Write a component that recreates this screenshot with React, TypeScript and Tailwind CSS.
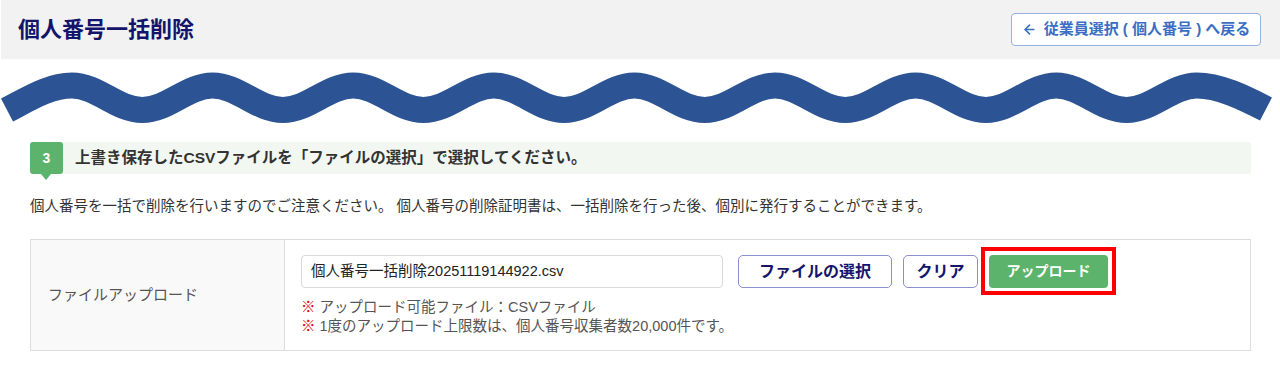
import React from 'react';
import { ArrowLeft } from 'lucide-react';

const FONT = { fontFamily: '"Liberation Sans", "Noto Sans CJK JP", sans-serif' };

function wavePath() {
    const half = 70.3;
    const k = 25.5;
    const crestY = 26.5;
    const troughY = 51;
    let d = `M 7 51 C 30 39 50 ${crestY} 72 ${crestY}`;
    let x = 72;
    let y = crestY;
    for (let i = 0; i < 16; i++) {
        const nx = x + half;
        const ny = y === crestY ? troughY : crestY;
        d += ` C ${(x + k).toFixed(1)} ${y} ${(nx - k).toFixed(1)} ${ny} ${nx.toFixed(1)} ${ny}`;
        x = nx;
        y = ny;
    }
    d += ` C ${(x + 22).toFixed(1)} ${crestY} ${(x + 46).toFixed(1)} 38 1266 50`;
    return d;
}

function Wave() {
    return (
        <svg width="1280" height="83" viewBox="0 0 1280 83" className="block">
            <path d={wavePath()} fill="none" stroke="#2c5393" strokeWidth="26" strokeLinecap="butt" />
        </svg>
    );
}

export default function App() {
    return (
        <div className="w-[1280px] min-h-[375px] bg-white text-[#333]" style={FONT}>
            {/* header */}
            <div className="h-[59px] bg-[#f2f2f2] flex items-center justify-between pl-[17px] pr-[19px] ml-px">
                <h1 className="text-[22px] font-bold text-[#14146b] leading-none">個人番号一括削除</h1>
                <button className="h-[33px] w-[250px] bg-white border border-[#95b3e6] rounded-[4px] text-[15px] font-bold text-[#3a6ec4] flex items-center justify-center">
                    <ArrowLeft size={15} strokeWidth={2.5} className="mr-[7px]" />
                    従業員選択 ( 個人番号 ) へ戻る
                </button>
            </div>

            <Wave />

            <div className="pl-[30px] pr-[29px]">
                {/* step */}
                <div className="h-[32px] bg-[#f2f8f1] rounded-[3px] flex items-center">
                    <div className="relative h-full w-[33px] bg-[#5cb46c] rounded-[3px] flex items-center justify-center text-white font-bold text-[14px]">
                        3
                        <span className="absolute left-[11px] top-full w-0 h-0 border-l-[5px] border-r-[5px] border-t-[6px] border-l-transparent border-r-transparent border-t-[#5cb46c]" />
                    </div>
                    <p className="ml-[12px] text-[15.5px] font-bold text-[#333]">
                        上書き保存したCSVファイルを「ファイルの選択」で選択してください。
                    </p>
                </div>

                <p className="mt-[22px] text-[14.5px] leading-[20px] text-[#333]">
                    個人番号を一括で削除を行いますのでご注意ください。 個人番号の削除証明書は、一括削除を行った後、個別に発行することができます。
                </p>

                {/* table */}
                <div className="mt-[23px] h-[112px] border border-[#dcdcdc] flex">
                    <div className="w-[254px] bg-[#f9f9f9] border-r border-[#dcdcdc] flex items-center pl-[17px] text-[15px] text-[#555]">
                        ファイルアップロード
                    </div>
                    <div className="flex-1 pl-[16px] pt-[15px]">
                        <div className="flex items-center">
                            <div className="w-[422px] h-[33px] border border-[#d9d9d9] rounded-[4px] flex items-center pl-[9px] text-[14.5px] text-[#222]">
                                個人番号一括削除20251119144922.csv
                            </div>
                            <button className="ml-[15px] w-[154px] h-[33px] bg-white border border-[#8a8fd0] rounded-[5px] text-[16px] font-bold text-[#14146b]">
                                ファイルの選択
                            </button>
                            <button className="ml-[11px] w-[75px] h-[33px] bg-white border border-[#8a8fd0] rounded-[5px] text-[16px] font-bold text-[#14146b]">
                                クリア
                            </button>
                            <div className="relative ml-[11px]">
                                <button className="w-[119px] h-[33px] bg-[#5cb46c] rounded-[4px] text-[14px] font-bold text-white">
                                    アップロード
                                </button>
                                <span className="absolute -left-[8px] -right-[8px] -top-[8px] -bottom-[7px] border-4 border-[#ff0000]" />
                            </div>
                        </div>
                        <div className="mt-[10px] text-[14.5px] leading-[19px] text-[#555]">
                            <p><span className="text-[#e60000]">※</span> アップロード可能ファイル：CSVファイル</p>
                            <p><span className="text-[#e60000]">※</span> 1度のアップロード上限数は、個人番号収集者数20,000件です。</p>
                        </div>
                    </div>
                </div>
            </div>
        </div>
    );
}
